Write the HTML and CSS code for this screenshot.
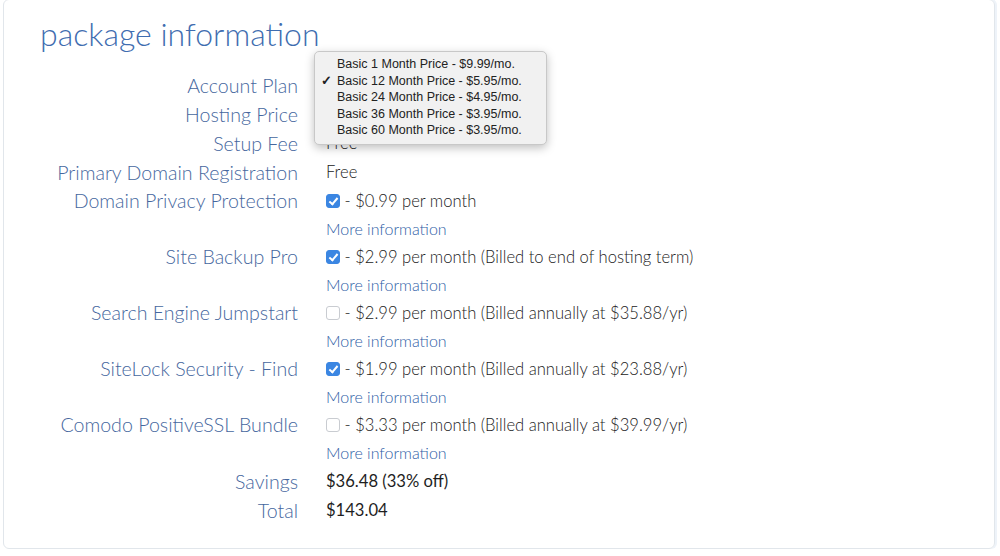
FILE: index.html
```html
<!DOCTYPE html>
<html lang="en">
<head>
  <meta charset="UTF-8" />
  <title>Package Information</title>
  <link rel="stylesheet" href="styles.css">
</head>
<body>

<div class="card">
  <h2>package information</h2>

  <div class="info-grid">
    <div class="label">Account Plan</div>
    <div class="value plan-cell">
      <!-- open select menu, covers the plan + hosting price values -->
      <ul class="menu">
        <li>Basic 1 Month Price - $9.99/mo.</li>
        <li class="checked">Basic 12 Month Price - $5.95/mo.</li>
        <li>Basic 24 Month Price - $4.95/mo.</li>
        <li>Basic 36 Month Price - $3.95/mo.</li>
        <li>Basic 60 Month Price - $3.95/mo.</li>
      </ul>
    </div>

    <div class="label">Hosting Price</div>
    <div class="value"></div>

    <div class="label">Setup Fee</div>
    <div class="value">Free</div>

    <div class="label">Primary Domain Registration</div>
    <div class="value">Free</div>

    <div class="label addon">Domain Privacy Protection</div>
    <div class="value addon">
      <div class="line"><span class="box on"></span> - $0.99 per month</div>
      <a class="more" href="#">More information</a>
    </div>

    <div class="label addon">Site Backup Pro</div>
    <div class="value addon">
      <div class="line"><span class="box on"></span> - $2.99 per month (Billed to end of hosting term)</div>
      <a class="more" href="#">More information</a>
    </div>

    <div class="label addon">Search Engine Jumpstart</div>
    <div class="value addon">
      <div class="line"><span class="box"></span> - $2.99 per month (Billed annually at $35.88/yr)</div>
      <a class="more" href="#">More information</a>
    </div>

    <div class="label addon">SiteLock Security - Find</div>
    <div class="value addon">
      <div class="line"><span class="box on"></span> - $1.99 per month (Billed annually at $23.88/yr)</div>
      <a class="more" href="#">More information</a>
    </div>

    <div class="label addon">Comodo PositiveSSL Bundle</div>
    <div class="value addon">
      <div class="line"><span class="box"></span> - $3.33 per month (Billed annually at $39.99/yr)</div>
      <a class="more" href="#">More information</a>
    </div>

    <div class="label">Savings</div>
    <div class="value total">$36.48 (33% off)</div>

    <div class="label">Total</div>
    <div class="value total">$143.04</div>
  </div>
</div>

</body>
</html>
```

FILE: styles.css
```css
* {
  box-sizing: border-box;
}

body {
  margin: 0;
  background: #fff;
  font-family: Lato, 'Open Sans', sans-serif;
  color: #333;
}

.card {
  margin: -1px 5px 0 3px;
  padding: 12px 0 23px;
  border: 1px solid #e1e6eb;
  border-radius: 6px;
  box-shadow: 2px 0 0 #eef3f9;
}

.card h2 {
  margin: 0 0 0 36px;
  height: 59px;
  padding-top: 2px;
  font-size: 32px;
  line-height: 40px;
  font-weight: 300;
  color: #3f6db0;
}

.info-grid {
  display: grid;
  grid-template-columns: 294px 1fr;
  grid-auto-rows: minmax(29px, auto);
  column-gap: 28px;
  align-items: start;
}

.label {
  text-align: right;
  font-size: 19.6px;
  font-weight: 300;
  line-height: 29px;
  color: #46679e;
  white-space: nowrap;
}

.value {
  font-size: 16.6px;
  font-weight: 300;
  line-height: 29px;
  color: #222;
}

.label.addon,
.value.addon .line,
.value.addon .more {
  line-height: 28px;
}

.value.addon .more {
  display: block;
  font-size: 16px;
  font-weight: 300;
  color: #2f5ea6;
  text-decoration: none;
}

.total {
  font-weight: 400;
  color: #1e1e1e;
}

.box {
  display: inline-block;
  width: 14px;
  height: 14px;
  border: 1px solid #c9ccd1;
  border-radius: 3px;
  background: #fff;
  vertical-align: -1px;
  position: relative;
}

.box.on {
  background: #3b86e2;
  border-color: #3b86e2;
}

.box.on::after {
  content: "";
  position: absolute;
  left: 4px;
  top: 1px;
  width: 3px;
  height: 7px;
  border: solid #fff;
  border-width: 0 2px 2px 0;
  transform: rotate(40deg);
}

.plan-cell {
  position: relative;
}

.menu {
  position: absolute;
  left: -12px;
  top: -20px;
  width: 233px;
  margin: 0;
  padding: 4px 0 5px;
  list-style: none;
  background: #f1f1f1;
  border: 1px solid #c8c8c8;
  border-radius: 5px;
  box-shadow: 0 3px 10px rgba(0, 0, 0, 0.25);
  font-family: 'Liberation Sans', Arial, sans-serif;
  font-size: 12.5px;
  line-height: 16.6px;
  color: #222;
}

.menu li {
  padding-left: 22px;
  position: relative;
}

.menu li.checked::before {
  content: "\2713";
  position: absolute;
  left: 6px;
  font-weight: 700;
}
```
